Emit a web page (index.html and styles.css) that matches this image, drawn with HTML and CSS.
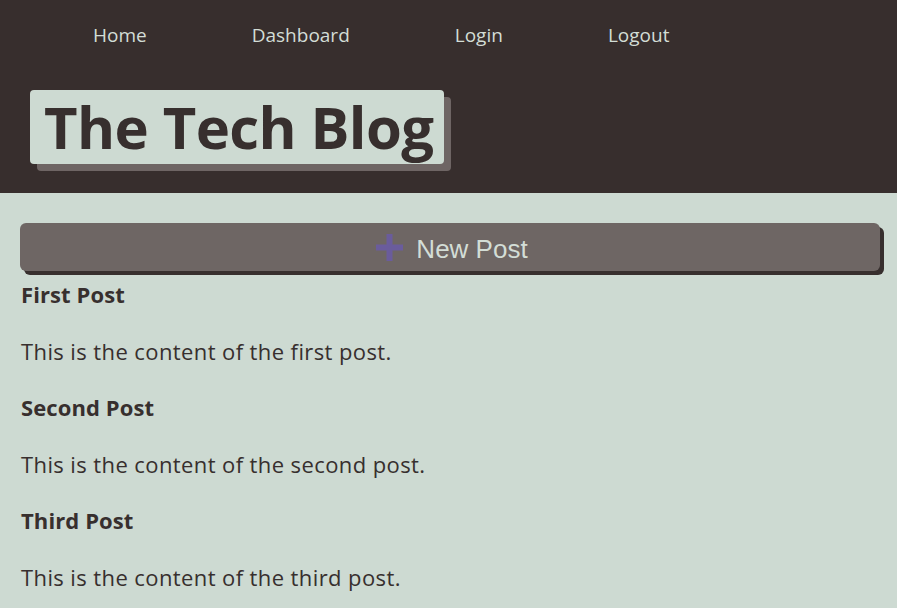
FILE: index.html
```html
<!DOCTYPE html>
<html>
<head>
<meta charset="utf-8">
<link rel="stylesheet" href="styles.css">
</head>
<body>
<header class="site-header">
  <nav class="nav">
    <a class="nav-link" href="#">Home</a>
    <a class="nav-link" href="#">Dashboard</a>
    <a class="nav-link" href="#">Login</a>
    <a class="nav-link" href="#">Logout</a>
  </nav>
  <h1 class="brand">The Tech Blog</h1>
</header>
<main class="main">
  <button class="new-post">
    <svg class="plus" width="27" height="27" viewBox="0 0 27 27"><path d="M13.5 0v27M0 13.5h27" stroke="#6a5c9c" stroke-width="6" fill="none"/></svg>
    <span class="new-post-label">New Post</span>
  </button>
  <article class="post">
    <h3 class="post-title">First Post</h3>
    <p class="post-body">This is the content of the first post.</p>
  </article>
  <article class="post">
    <h3 class="post-title">Second Post</h3>
    <p class="post-body">This is the content of the second post.</p>
  </article>
  <article class="post">
    <h3 class="post-title">Third Post</h3>
    <p class="post-body">This is the content of the third post.</p>
  </article>
</main>
</body>
</html>
```
FILE: styles.css
```css
html, body {
  margin: 0;
  padding: 0;
  background: #cddad2;
  font-family: "Open Sans", "Noto Sans", sans-serif;
  color: #372f2e;
}
.site-header {
  background: #372e2d;
  height: 193px;
  box-sizing: border-box;
  padding: 22px 0 0 30px;
}
.nav {
  display: flex;
  gap: 105px;
  padding-left: 63px;
}
.nav-link {
  color: #d3ddd6;
  text-decoration: none;
  font-size: 19px;
  line-height: 26px;
}
.brand {
  display: inline-block;
  margin: 42px 0 0 0;
  background: #cddad2;
  color: #372f2e;
  font-family: "Open Sans", "Noto Sans", sans-serif;
  font-weight: 700;
  font-size: 58px;
  line-height: 74px;
  padding: 0 11px 0 14px;
  border-radius: 4px;
  box-shadow: 7px 7px 0 #6e6564;
  letter-spacing: -0.6px;
}
.main {
  padding: 30px 17px 0 20px;
}
.new-post {
  display: flex;
  align-items: center;
  justify-content: center;
  gap: 13px;
  width: 860px;
  height: 48px;
  background: #6e6664;
  color: #d3ddd6;
  border: none;
  border-radius: 6px;
  box-shadow: 4px 4px 0 #372f2e;
  font-family: "Liberation Sans", Arial, sans-serif;
  font-size: 26px;
  padding: 4px 0 0 4px;
  margin: 0;
}
.plus {
  display: block;
  flex-shrink: 0;
  margin-top: -3px;
}
.new-post-label {
  display: block;
}
.post-title {
  margin: 10px 0 0 1px;
  font-size: 22px;
  line-height: 26px;
  font-weight: 700;
  letter-spacing: 0.1px;
}
.post-body {
  margin: 30px 0 0 1px;
  font-size: 22px;
  line-height: 28px;
  letter-spacing: 0.4px;
}
.post + .post .post-title {
  margin-top: 29px;
}
```
